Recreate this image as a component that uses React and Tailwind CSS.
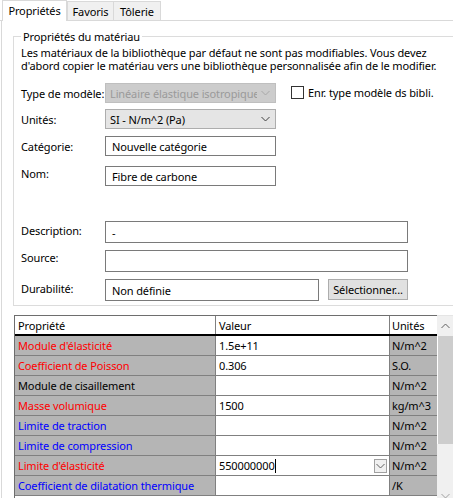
import React from 'react'

const RED = 'text-[#ff0000]'
const BLUE = 'text-[#0000ff]'
const BLACK = 'text-black'

const rows = [
  { name: "Module d'élasticité", value: '1.5e+11', unit: 'N/m^2', color: RED },
  { name: 'Coefficient de Poisson', value: '0.306', unit: 'S.O.', color: RED },
  { name: 'Module de cisaillement', value: '', unit: 'N/m^2', color: BLACK },
  { name: 'Masse volumique', value: '1500', unit: 'kg/m^3', color: RED },
  { name: 'Limite de traction', value: '', unit: 'N/m^2', color: BLUE },
  { name: 'Limite de compression', value: '', unit: 'N/m^2', color: BLUE },
  { name: "Limite d'élasticité", value: '550000000', unit: 'N/m^2', color: RED, editing: true },
  { name: 'Coefficient de dilatation thermique', value: '', unit: '/K', color: BLUE },
]

function Chevron({ color = '#404040', up = false }) {
  return (
    <svg width="9" height="6" viewBox="0 0 9 6" className="shrink-0">
      <polyline
        points={up ? '0.5,5 4.5,1 8.5,5' : '0.5,1 4.5,5 8.5,1'}
        fill="none"
        stroke={color}
        strokeWidth="1"
      />
    </svg>
  )
}

function Field({ label, labelPad, children, mt }) {
  return (
    <div className={`flex ${mt}`}>
      <div className={`w-[84px] shrink-0 whitespace-nowrap ${labelPad}`}>{label}</div>
      {children}
    </div>
  )
}

function TextBox({ value, w, h = 'h-[20px]' }) {
  return (
    <div className={`${w} ${h} border border-[#7a7a7a] bg-white px-[6px] flex items-center`}>
      {value}
    </div>
  )
}

export default function App() {
  return (
    <div className="w-[453px] h-[498px] overflow-hidden bg-white text-[11px] tracking-[-0.12px] leading-[15px] text-black font-['Noto_Sans',sans-serif] flex flex-col">
      {/* tabs */}
      <div className="flex items-end h-[21px] shrink-0 border-b border-[#d9d9d9]">
        <div className="ml-[2px] h-[21px] w-[65px] bg-white border border-b-0 border-[#d9d9d9] -mb-px relative z-10 flex items-start pt-[2px] justify-center">
          Propriétés
        </div>
        <div className="h-[19px] w-[47px] bg-[#f0f0f0] border border-b-0 border-[#d9d9d9] flex items-center justify-center">
          Favoris
        </div>
        <div className="h-[19px] w-[47px] bg-[#f0f0f0] border border-b-0 border-l-0 border-[#d9d9d9] flex items-center justify-center">
          Tôlerie
        </div>
      </div>

      {/* page */}
      <div className="flex-1 ml-px border-l border-[#d9d9d9] flex flex-col">
        <fieldset className="mt-[8px] ml-[11px] w-[460px] border border-[#dcdcdc] pl-[7px] pr-0 pb-[4px]">
          <legend className="px-[2px]">Propriétés du matériau</legend>
          <p className="mt-[2px] leading-[13px] whitespace-nowrap">
            Les matériaux de la bibliothèque par défaut ne sont pas modifiables. Vous devez
            <br />
            d'abord copier le matériau vers une bibliothèque personnalisée afin de le modifier.
          </p>

          <Field label="Type de modèle:" labelPad="pt-[3px]" mt="mt-[11px]">
            <div className="w-[171px] h-[20px] bg-[#cccccc] border border-[#bfbfbf] flex items-center pl-[4px] pr-[5px] text-[#9a9a9a] overflow-hidden">
              <span className="flex-1 whitespace-nowrap overflow-hidden">Linéaire élastique isotropique</span>
              <span className="ml-[4px]"><Chevron color="#a8a8a8" /></span>
            </div>
            <label className="ml-[15px] flex items-start pt-[2px] gap-[4px]">
              <span className="mt-px w-[13px] h-[13px] border border-[#333333] bg-white" />
              <span>Enr. type modèle ds bibli.</span>
            </label>
          </Field>

          <Field label="Unités:" labelPad="pt-[3px]" mt="mt-[6px]">
            <div className="w-[171px] h-[20px] bg-[#e5e5e5] border border-[#adadad] flex items-center pl-[4px] pr-[5px]">
              <span className="flex-1">SI - N/m^2 (Pa)</span>
              <Chevron color="#404040" />
            </div>
          </Field>

          <Field label="Catégorie:" labelPad="pt-[3px]" mt="mt-[7px]">
            <TextBox w="w-[171px]" value="Nouvelle catégorie" />
          </Field>

          <Field label="Nom:" labelPad="pt-0" mt="mt-[10px]">
            <TextBox w="w-[171px]" value="Fibre de carbone" />
          </Field>

          <Field label="Description:" labelPad="pt-[2px]" mt="mt-[35px]">
            <TextBox w="w-[303px]" h="h-[22px]" value="-" />
          </Field>

          <Field label="Source:" labelPad="pt-0" mt="mt-[7px]">
            <TextBox w="w-[303px]" h="h-[22px]" value="" />
          </Field>

          <Field label="Durabilité:" labelPad="pt-[2px]" mt="mt-[7px]">
            <TextBox w="w-[214px]" h="h-[22px]" value="Non définie" />
            <button className="ml-[9px] w-[80px] h-[21px] bg-[#e1e1e1] border border-[#adadad] flex items-center justify-center">
              Sélectionner...
            </button>
          </Field>
        </fieldset>

        {/* property grid */}
        <div className="mt-[9px] ml-[12px] flex">
          <div className="border-l border-t border-[#6e6e6e]">
            <div className="flex h-[20px] border-b-2 border-black bg-white">
              <div className="w-[201px] border-r border-[#808080] pl-[3px] flex items-center">Propriété</div>
              <div className="w-[174px] border-r border-[#808080] pl-[3px] flex items-center">Valeur</div>
              <div className="w-[47px] pl-[2px] flex items-center">Unités</div>
            </div>
            {rows.map((r) => (
              <div key={r.name} className="flex h-[20px] border-b border-[#808080]">
                <div className={`w-[201px] border-r border-[#808080] bg-[#b5b5b5] pl-[3px] flex items-center whitespace-nowrap ${r.color}`}>
                  {r.name}
                </div>
                <div className="w-[174px] border-r border-[#808080] bg-white pl-[3px] pr-[2px] flex items-center">
                  <span className="flex-1 flex items-center">
                    {r.value}
                    {r.editing && <span className="w-px h-[14px] bg-black" />}
                  </span>
                  {r.editing && (
                    <span className="w-[13px] h-[14px] bg-[#f0f0f0] border border-[#a0a0a0] flex items-center justify-center">
                      <Chevron color="#606060" />
                    </span>
                  )}
                </div>
                <div className="w-[47px] bg-[#b5b5b5] pl-[2px] flex items-center">{r.unit}</div>
              </div>
            ))}
          </div>
          <div className="w-[17px] shrink-0 flex flex-col border-t border-[#e5e5e5]">
            <div className="h-[20px] bg-[#f0f0f0] flex items-center justify-center">
              <Chevron color="#606060" up />
            </div>
            <div className="h-[108px] mx-px bg-[#cdcdcd]" />
            <div className="h-[42px] bg-[#f0f0f0]" />
            <div className="h-[20px] bg-[#f0f0f0] flex items-center justify-center">
              <Chevron color="#a0a0a0" />
            </div>
          </div>
        </div>
      </div>
    </div>
  )
}
